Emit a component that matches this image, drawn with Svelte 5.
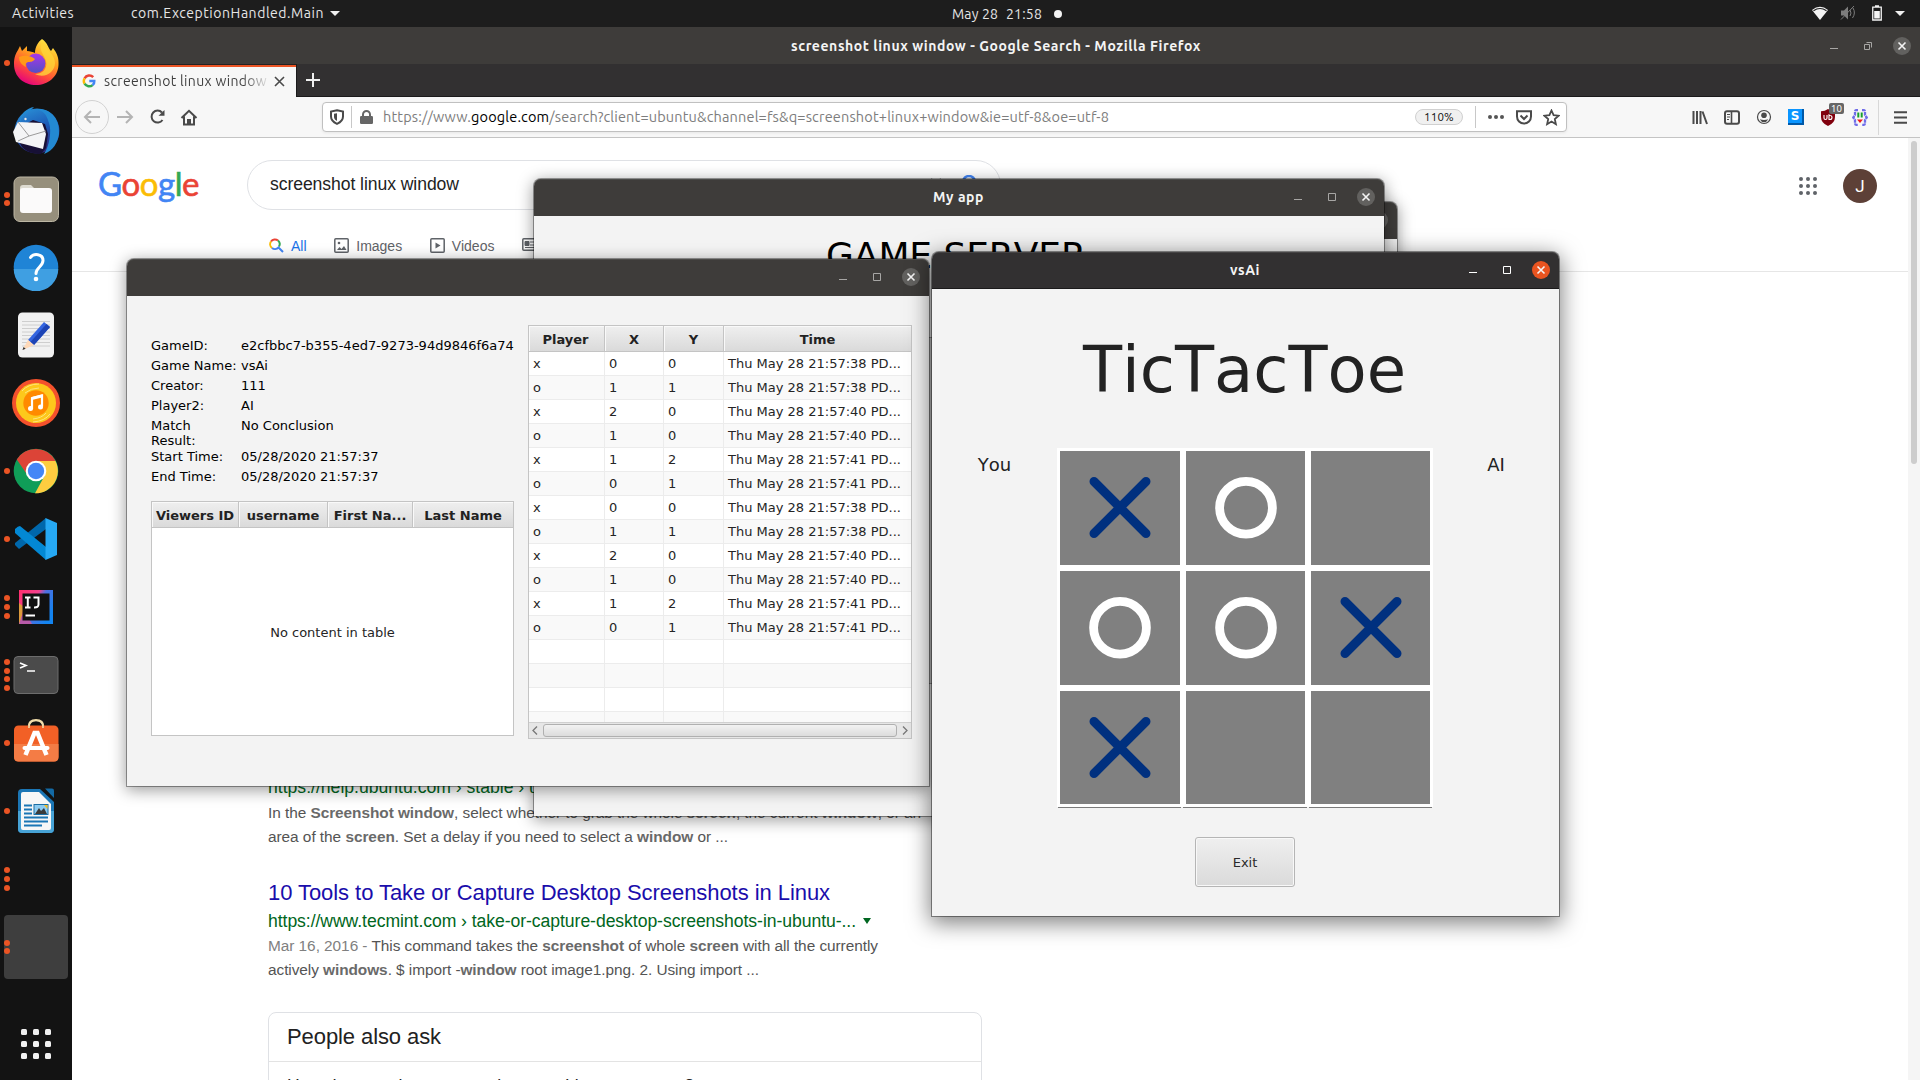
<script>
  // Spreads letters so a run of text occupies a given width
  function fit(node, width) {
    node.style.letterSpacing = '0px';
    const natural = node.getBoundingClientRect().width;
    const count = node.textContent.length;
    node.style.letterSpacing = (width - natural) / count + 'px';
  }

  const dock = [
    { id: 'firefox', dots: 1 },
    { id: 'thunderbird', dots: 0 },
    { id: 'files', dots: 2 },
    { id: 'help', dots: 0 },
    { id: 'editor', dots: 0 },
    { id: 'music', dots: 0 },
    { id: 'chrome', dots: 1 },
    { id: 'vscode', dots: 1 },
    { id: 'idea', dots: 3 },
    { id: 'terminal', dots: 4 },
    { id: 'software', dots: 1 },
    { id: 'writer', dots: 1 },
    { id: 'blank', dots: 3 },
    { id: 'active', dots: 2 }
  ];

  const info = [
    ['GameID:', 'e2cfbbc7-b355-4ed7-9273-94d9846f6a74'],
    ['Game Name:', 'vsAi'],
    ['Creator:', '111'],
    ['Player2:', 'AI'],
    ['Match Result:', 'No Conclusion'],
    ['Start Time:', '05/28/2020 21:57:37'],
    ['End Time:', '05/28/2020 21:57:37']
  ];

  const half = [
    ['x', 0, 0, 38],
    ['o', 1, 1, 38],
    ['x', 2, 0, 40],
    ['o', 1, 0, 40],
    ['x', 1, 2, 41],
    ['o', 0, 1, 41]
  ];
  const moves = [...half, ...half, null, null, null, null];

  const board = ['x', 'o', '', 'o', 'o', 'x', 'x', '', ''];
  const nine = [0, 1, 2, 3, 4, 5, 6, 7, 8];
</script>

{#snippet controls(active)}
  <div class="controls" class:active>
    <svg width="12" height="16" viewBox="0 0 12 16"><path d="M2 10.5h8" /></svg>
    <svg width="12" height="16" viewBox="0 0 12 16"><path d="M2.5 4.5h7v7h-7z" /></svg>
    <svg class="close" width="18" height="18" viewBox="0 0 18 18"><circle cx="9" cy="9" r="9" /><path d="M5.5 5.5l7 7m0-7l-7 7" /></svg>
  </div>
{/snippet}

{#snippet dockIcon(id)}
  <svg class="icon" width="48" height="48" viewBox="0 0 48 48">
    {#if id === 'firefox'}
      <path d="M30 0c6 4 6 9 9 12l2-3c4 5 6 10 5.500 17C46 38 36 46 24 46S2 38 2 25c0-7 2-11 4-14l2-4 2 5 5-5v5c3 0 6 1 8 2 0-6 3-11 7-14z" fill="url(#ffx)" />
      <path d="M31 3c-6 7 1 12 3 19 2 9-5 13-11 13 10 5 20-2 20-11 0-9-9-13-12-21z" fill="#ffd43a" opacity=".8" />
      <circle cx="23.700" cy="24.300" r="9.700" fill="url(#orb)" />
      <path d="M7 18c5-2 11-2 16 2-2 3-5 3-7 3-2 1-3 2-2 5-4-2-7-5-7-10z" fill="#ff9a18" />
    {:else if id === 'thunderbird'}
      <circle cx="25" cy="24" r="22.500" fill="url(#tb)" />
      <path d="M10 40l-9-16 20-11 12 4 3 10-2 14-5 6c-8 0-14-2-19-7z" fill="#171036" />
      <path d="M6 15l24 1 4 11-3 15L4 35 1 25z" fill="#f4f5f6" />
      <path d="M6 15l11 14 17-5M17 29L6 34" fill="none" stroke="#9b9b9b" />
      <path d="M8 16C7 7 15 1 22 0l-3 3c14-2 16 7 18 13 3 8 0 24-5 31 9-3 14-12 15-20C48 12 39 2 27 2c-8 0-18 5-19 14z" fill="#2389d2" />
      <circle cx="13.500" cy="12" r="1.200" fill="#e6e6e6" />
    {:else if id === 'files'}
      <rect x="2" y="2" width="44.500" height="44.500" rx="6" fill="#968f7c" stroke="#bdb7a4" />
      <path d="M8 13q0-3 3-3h8l4 4h15v8H8z" fill="#dedbd1" />
      <rect x="8" y="13" width="32" height="25" rx="3" fill="#fbfafa" />
    {:else if id === 'help'}
      <circle cx="24" cy="24" r="22.300" fill="#1f84d6" />
      <path d="M1.700 26h44.600a22.300 22.300 0 0 1-44.600 0z" fill="#3f9fe2" />
      <path d="M18.500 14.500c3-4.500 12.500-4 12.500 3 0 6-7 7-7 13" fill="none" stroke="#fff" stroke-width="3" stroke-linecap="round" />
      <circle cx="24" cy="36" r="2.300" fill="#fff" />
    {:else if id === 'editor'}
      <rect x="6" y="1.500" width="36" height="45" rx="4.500" fill="#f1f1f1" />
      <path d="M10 10.500h28M10 14h28M10 17.500h28M10 21h28M10 24.500h28M10 28h28M10 31.500h28M10 35h28" stroke="#cecece" />
      <path d="M16 29l16-18 6 5-16 18z" fill="#3465e0" />
      <path d="M18.500 31l16-18 3.500 3-16 18z" fill="#1d44b5" />
      <path d="M16 29l6 5-11.500 5z" fill="#ffd9b8" />
      <path d="M11.500 36l2.200 1.800-3.200 1.200z" fill="#333" />
    {:else if id === 'music'}
      <circle cx="24" cy="24" r="24" fill="#f4512c" />
      <circle cx="24" cy="24" r="20" fill="#fdc81b" />
      <path d="M10 12q6-7 17-7M13 14q6-5 14-5M21 43q12-1 17-8M21 40q9-1 13-6" fill="none" stroke="#ffe37d" />
      <circle cx="24" cy="24" r="12.700" fill="#ff8a00" />
      <path d="M20 30V19l10-2.500v11" fill="none" stroke="#fff" stroke-width="2.200" />
      <path d="M20 18l10-2.500v3L20 21z" fill="#fff" />
      <circle cx="18.500" cy="29.500" r="2.500" fill="#fff" /><circle cx="28.500" cy="28" r="2.500" fill="#fff" />
    {:else if id === 'chrome'}
      <circle cx="24" cy="24" r="22.300" fill="#109d58" />
      <path d="M24 14h19.500A22.300 22.300 0 0 1 23 46.300L33 28z" fill="#fdcd40" />
      <path d="M4.800 12.500A22.300 22.300 0 0 1 43.600 14H24l-9 6-1 6z" fill="#dc4437" />
      <circle cx="24" cy="24" r="10.300" fill="#fff" /><circle cx="24" cy="24" r="8.200" fill="#4486f6" />
    {:else if id === 'vscode'}
      <path d="M3 30l4 4 27-20V3L3 28z" fill="#0067ab" />
      <path d="M3 14q3-3 5-3l26 21v13L3 18z" fill="#0388d4" />
      <path d="M33.500 3L45 8v32l-11.500 5z" fill="#26a9f4" />
    {:else if id === 'idea'}
      <rect x="7" y="7" width="34" height="34" fill="url(#ij)" />
      <path d="M7 20l5 4-4 17H7z" fill="#dd9a3c" />
      <path d="M7 41l5-14 8 14z" fill="#b75aa8" />
      <rect x="10.500" y="10.500" width="27" height="27" fill="#111" />
      <path d="M13 14.500h5.500M15.800 14.500V24M13 24.500h5.500M21.500 14.500h5v7q0 3.200-4.500 3M13.500 32.500h9.500" fill="none" stroke="#fff" stroke-width="2" />
    {:else if id === 'terminal'}
      <rect x="2" y="5.500" width="44" height="37" rx="4" fill="#4b4b4b" stroke="#6d6d6d" />
      <path d="M8 12l6 2.500L8 17M15 20h8" fill="none" stroke="#fff" stroke-width="1.600" />
    {:else if id === 'software'}
      <path d="M16.500 14V8q0-7 7.500-7t7.500 7v6" fill="none" stroke="#f1ddaa" stroke-width="1.800" />
      <rect x="2" y="6.500" width="44.500" height="36" rx="4.500" fill="#f26026" />
      <path d="M2 25h44.500v13q0 4.500-4.500 4.500H6.500Q2 42.500 2 38z" fill="#f47c45" />
      <path d="M17 9V7q1-5.500 7-5.500T31 7v2" fill="none" stroke="#f1ddaa" stroke-width="1.600" />
      <path d="M13.500 36l9-22h3l9 22" fill="none" stroke="#fff" stroke-width="4.500" />
      <path d="M12.500 29h23" stroke="#fff" stroke-width="4" stroke-linecap="round" />
    {:else if id === 'writer'}
      <path d="M10 2h18l14 13v27q0 4-4 4H10q-4 0-4-4V6q0-4 4-4z" fill="#1b76b5" />
      <path d="M6 24h36v18q0 4-4 4H10q-4 0-4-4z" fill="#47a3d6" />
      <path d="M33 1.500h7q2 0 2 2V11z" fill="#136aa5" />
      <path d="M11 5h16l12 12v24q0 2-2 2H11q-2 0-2-2V7q0-2 2-2z" fill="#f7f7f7" />
      <path d="M12 18.500h8M12 22.500h8M12 26.500h8M12 30.500h24M12 34.500h24M12 38.500h18" stroke="#1b76b5" stroke-width="2" />
      <rect x="22" y="17.500" width="14" height="10" fill="#8ccbf1" stroke="#1c6ea4" />
      <path d="M23 27l4-6 2 3 3-3 3 6z" fill="#3b3b3b" /><path d="M32 18h3.500v4z" fill="#f7bd1e" />
    {/if}
  </svg>
{/snippet}

<div class="desktop">
  <svg class="defs" width="0" height="0">
    <defs>
      <linearGradient id="ffx" x1=".8" y1="0" x2=".3" y2="1"><stop offset="0" stop-color="#fff14a" /><stop offset=".4" stop-color="#ff9f1e" /><stop offset=".7" stop-color="#ff4b3a" /><stop offset="1" stop-color="#e4007f" /></linearGradient>
      <linearGradient id="orb" x1="0" y1="0" x2="0" y2="1"><stop offset="0" stop-color="#a936e8" /><stop offset="1" stop-color="#5350c4" /></linearGradient>
      <linearGradient id="tb" x1="0" y1="0" x2=".4" y2="1"><stop offset="0" stop-color="#2b97da" /><stop offset=".6" stop-color="#1c55b4" /><stop offset="1" stop-color="#2c2a7d" /></linearGradient>
      <linearGradient id="ij" x1="0" y1="0" x2="1" y2=".6"><stop offset="0" stop-color="#ff2f6d" /><stop offset=".45" stop-color="#f4418d" /><stop offset=".6" stop-color="#4f6fe0" /><stop offset="1" stop-color="#1384f0" /></linearGradient>
    </defs>
  </svg>

  <header class="topbar">
    <div class="activities"><span class="t" use:fit={62}>Activities</span></div>
    <span class="t" use:fit={193}>com.ExceptionHandled.Main</span>
    <i class="caret"></i>
    <div class="clock"><span class="t" use:fit={46}>May 28</span><span class="t" use:fit={36}>21:58</span><i class="dot"></i></div>
    <div class="tray">
      <svg width="16" height="14" viewBox="0 0 16 14"><path d="M0 4q8-6.500 16 0l-8 10z" fill="#f4f4f4" /><path d="M1.500 4.800q6.500-4.500 13 0" stroke="#1d1d1d" fill="none" stroke-width="1.100" /></svg>
      <svg width="16" height="16" viewBox="0 0 16 16"><path d="M1 5.500h3l4-4v13l-4-4H1z" fill="#7d7d7d" /><path d="M1 14.500L14 1M10 11q2-3 0-6M12.500 13q3.500-5 .5-10" stroke="#7d7d7d" fill="none" /></svg>
      <svg width="10" height="16" viewBox="0 0 10 16"><path d="M.75 2.200h8.500v12.800H.75zM3 1h4" stroke="#f4f4f4" stroke-width="1.300" fill="none" /><path d="M2.200 6h5.600v7.500H2.200z" fill="#f4f4f4" /></svg>
      <i class="caret"></i>
    </div>
  </header>

  <div class="main">
    <nav class="dock">
      {#each dock as item}
        <div class="slot" class:on={item.id === 'active'}>
          <div class="dots">{#each { length: item.dots } as _}<i></i>{/each}</div>
          {@render dockIcon(item.id)}
        </div>
      {/each}
      <div class="launcher">{#each nine as n}<i></i>{/each}</div>
    </nav>

    <section class="firefox">
      <div class="ff-title">
        <span class="t bold" use:fit={410}>screenshot linux window - Google Search - Mozilla Firefox</span>
        <div class="controls">
          <svg width="12" height="16" viewBox="0 0 12 16"><path d="M2 10.500h8" /></svg>
          <svg width="12" height="16" viewBox="0 0 12 16"><path d="M2.500 6.500h5v5h-5zM4.500 4.500h5v5" /></svg>
          <svg class="close" width="18" height="18" viewBox="0 0 18 18"><circle cx="9" cy="9" r="9" /><path d="M5.500 5.500l7 7m0-7l-7 7" /></svg>
        </div>
      </div>
      <div class="tabs">
        <div class="tab">
          <svg width="14" height="14" viewBox="0 0 14 14" fill="none" stroke-width="2.500"><path d="M11.200 3.200A5.300 5.300 0 0 0 2.600 4.300" stroke="#ea4335" /><path d="M2.600 4.300a5.300 5.300 0 0 0 0 5.400" stroke="#fbbc05" /><path d="M2.600 9.700a5.300 5.300 0 0 0 8 1.400" stroke="#34a853" /><path d="M10.600 11.100Q12.500 9.500 12.300 7H7.300" stroke="#4285f4" /></svg>
          <span class="t tabtext" use:fit={163}>screenshot linux window</span>
          <svg width="11" height="11" viewBox="0 0 11 11"><path d="M1 1l9 9m0-9l-9 9" stroke="#4a4a4a" stroke-width="1.600" /></svg>
        </div>
        <svg class="plus" width="14" height="14" viewBox="0 0 14 14"><path d="M7 0v14M0 7h14" stroke="#f0f0f0" stroke-width="2" /></svg>
      </div>

      <div class="toolbar">
        <div class="navbtns">
          <div class="back"><svg width="18" height="16" viewBox="0 0 18 16"><path d="M17 8H2M8 2L2 8l6 6" /></svg></div>
          <svg class="light" width="18" height="16" viewBox="0 0 18 16"><path d="M1 8h15M10 2l6 6-6 6" /></svg>
          <svg class="dark" width="17" height="16" viewBox="0 0 17 16"><path d="M13 3.500A6 6 0 1 0 13.500 11" /><path d="M15.500 1v5.800h-6z" fill="#4a4a4a" stroke="none" /></svg>
          <svg class="dark" width="18" height="17" viewBox="0 0 18 17"><path d="M1.500 9L9 1.800 16.500 9M4 7.500v8h10v-8" /><path d="M7 15v-5h4v5z" fill="#4a4a4a" stroke="none" /></svg>
        </div>
        <div class="url">
          <svg class="dark" width="14" height="16" viewBox="0 0 14 16"><path d="M7 1.300L13 2.500v5c0 4-3 6-6 7.300C4 13.500 1 11.500 1 7.500v-5z" /><path d="M7 4.200L4 4.800V8c0 2 1.500 3.300 3 4z" fill="#4a4a4a" stroke="none" /></svg>
          <i class="vsep"></i>
          <svg width="13" height="14" viewBox="0 0 13 14"><path d="M3 7V4.500a3.500 3.500 0 0 1 7 0V7" fill="none" stroke="#666" stroke-width="2" /><rect y="6" width="13" height="8" rx="1.200" fill="#666" /></svg>
          <span class="t addr" use:fit={726}>https://www.<b>google.com</b>/search?client=ubuntu&amp;channel=fs&amp;q=screenshot+linux+window&amp;ie=utf-8&amp;oe=utf-8</span>
          <span class="zoom"><span class="t" use:fit={30}>110%</span></span>
          <i class="vsep"></i>
          <svg width="16" height="4" viewBox="0 0 16 4" fill="#555"><circle cx="2" cy="2" r="2" /><circle cx="8" cy="2" r="2" /><circle cx="14" cy="2" r="2" /></svg>
          <svg class="dark" width="16" height="15" viewBox="0 0 16 15"><path d="M1 1.200h14v5.300a7 7 0 0 1-14 0z" /><path d="M4.500 5.500L8 9l3.500-3.500" /></svg>
          <svg class="dark thin" width="17" height="17" viewBox="0 0 17 17"><path d="M8.500 1.500l2.100 4.700 5 .5-3.800 3.400 1.100 5.100-4.400-2.600-4.400 2.600 1.100-5.100L1.400 6.700l5-.5z" /></svg>
        </div>
        <div class="ext">
          <svg class="dark" width="16" height="15" viewBox="0 0 16 15"><path d="M1.500 1v13M5 1v13M8.500 1v13M10.500 1.500L15 14" /></svg>
          <svg class="dark" width="16" height="15" viewBox="0 0 16 15"><rect x="1" y="1.200" width="14" height="12.600" rx="2" /><path d="M7.500 1v13" stroke-width="1.600" /><path d="M3 4.500h3M3 7h3M3 9.500h2" stroke-width="1" /></svg>
          <svg width="16" height="16" viewBox="0 0 16 16"><circle cx="8" cy="8" r="6.500" fill="none" stroke="#4a4a4a" stroke-width="1.200" /><circle cx="8" cy="6.200" r="2.800" fill="#4a4a4a" /><path d="M3.800 10.300q4.200 1.400 8.400 0-1.500 3-4.200 3t-4.200-3z" fill="#4a4a4a" /></svg>
          <div class="sbox">S</div>
          <div class="ublock">
            <svg width="16" height="17" viewBox="0 0 16 17"><path d="M8 0q3 2.300 7 2.300V8q0 6-7 9-7-3-7-9V2.300Q5 2.300 8 0z" fill="#80000d" /><path d="M4 6v3q0 1.500 1.500 1.500T7 9V6m2 0v4.500h1q2 0 2-2t-2-2z" fill="none" stroke="#fff" stroke-width="1.100" /></svg>
            <span class="badge">10</span>
          </div>
          <svg width="16" height="17" viewBox="0 0 16 17"><path d="M6 1.200H4Q3 1.200 3 3v3L1.300 8.500 3 11v3q0 1.800 1 1.800h2M10 1.200h2q1 0 1 1.800v3l1.700 2.500L13 11v3q0 1.800-1 1.800h-2" fill="none" stroke="#6f6ce8" stroke-width="2.300" stroke-dasharray="3.500 .6" /><path d="M6.300 3.500v5M9.700 3.500v5" stroke="#19a02b" stroke-width="2" /><path d="M5 10.500h6L8 14z" fill="#f01818" /></svg>
          <i class="vsep long"></i>
          <svg class="dark" width="13" height="13" viewBox="0 0 13 13"><path d="M0 1.200h13M0 6.500h13M0 11.800h13" /></svg>
        </div>
      </div>

      <div class="page">
        <div class="viewport">
          <div class="ghead">
            <div class="grow">
              <div class="logo" use:fit={101}><span class="b">G</span><span class="r">o</span><span class="y">o</span><span class="b">g</span><span class="g">l</span><span class="r">e</span></div>
              <div class="search">
                <span use:fit={189}>screenshot linux window</span>
                <svg width="60" height="20" viewBox="0 0 60 20" fill="none"><path d="M4 4l10 10M14 4L4 14" stroke="#70757a" stroke-width="2" /><circle cx="42" cy="7" r="6" stroke="#4285f4" stroke-width="2.500" /></svg>
              </div>
              <div class="apps">{#each nine as n}<i></i>{/each}</div>
              <div class="avatar">J</div>
            </div>
            <div class="gtabs">
              <span class="sel"><svg width="15" height="15" viewBox="0 0 15 15" fill="none" stroke-width="2"><path d="M2 3.500A4.800 4.800 0 0 1 9 2.500" stroke="#ea4335" /><path d="M9 2.500a4.800 4.800 0 0 1 1 6" stroke="#34a853" /><path d="M2 3.500a4.800 4.800 0 0 0 1 6.500" stroke="#fbbc04" /><path d="M3 10a4.800 4.800 0 0 0 6.500-.5l4.500 4.500" stroke="#4285f4" /></svg>All</span>
              <span><svg width="15" height="15" viewBox="0 0 15 15"><rect x=".8" y=".8" width="13.400" height="13.400" rx="1" fill="none" stroke="#5f6368" stroke-width="1.500" /><path d="M3 12l2.500-3L7.500 11 10 8l2.500 4z" fill="#5f6368" /><circle cx="5" cy="5" r="1.300" fill="#5f6368" /></svg>Images</span>
              <span><svg width="15" height="15" viewBox="0 0 15 15"><rect x=".8" y=".8" width="13.400" height="13.400" rx="1" fill="none" stroke="#5f6368" stroke-width="1.500" /><path d="M5.500 4.500v6l5-3z" fill="#5f6368" /></svg>Videos</span>
              <span><svg width="15" height="13" viewBox="0 0 15 13"><rect x=".8" y=".8" width="13.400" height="11.400" rx="1" fill="none" stroke="#5f6368" stroke-width="1.500" /><path d="M3 3.500h4v4H3zM8 4h5M8 7h5M3 9.500h10" fill="#5f6368" stroke="#5f6368" /></svg></span>
            </div>
          </div>
          <div class="results">
            <p class="link">https://help.ubuntu.com › stable › ubuntu-help</p>
            <div class="snip first">
              <p><span use:fit={653}>In the <b>Screenshot window</b>, select whether to grab the whole <b>screen</b>, the current <b>window</b>, or an</span></p>
              <p><span use:fit={460}>area of the <b>screen</b>. Set a delay if you need to select a <b>window</b> or ...</span></p>
            </div>
            <h3><span use:fit={562}>10 Tools to Take or Capture Desktop Screenshots in Linux</span></h3>
            <p class="link second"><span use:fit={588}>https://www.tecmint.com › take-or-capture-desktop-screenshots-in-ubuntu-...</span><i class="gcaret"></i></p>
            <div class="snip">
              <p><span use:fit={610}><em>Mar 16, 2016 -</em>{' '}This command takes the <b>screenshot</b> of whole <b>screen</b> with all the currently</span></p>
              <p><span use:fit={491}>actively <b>windows</b>. $ import -<b>window</b> root image1.png. 2. Using import ...</span></p>
            </div>
            <div class="ask">
              <h4><span use:fit={154}>People also ask</span></h4>
              <p><span use:fit={407}>How do you take a screenshot on a Linux computer?</span></p>
            </div>
          </div>
        </div>
        <div class="scroll"><i></i></div>
      </div>
    </section>
  </div>

  <div class="win hidden-win"><div class="bar">{@render controls(false)}</div></div>

  <div class="win app">
    <div class="bar"><span class="t bold" use:fit={51}>My app</span>{@render controls(false)}</div>
    <div class="server"><span use:fit={260}>GAME SERVER</span></div>
    <div class="strip"></div>
  </div>

  <div class="win game-info">
    <div class="bar">{@render controls(false)}</div>
    <div class="info-body">
      <div class="left">
        <dl>
          {#each info as [label, value]}
            <dt>{label}</dt>
            <dd>{value}</dd>
          {/each}
        </dl>
        <div class="table viewers">
          <div class="th"><span>Viewers ID</span><span>username</span><span>First Na...</span><span>Last Name</span></div>
          <div class="none">No content in table</div>
        </div>
      </div>
      <div class="table moves">
        <div class="th"><span>Player</span><span>X</span><span>Y</span><span>Time</span></div>
        <div class="rows">
          {#each moves as m}
            <div class="tr">
              {#if m}
                <span>{m[0]}</span><span>{m[1]}</span><span>{m[2]}</span><span>Thu May 28 21:57:{m[3]} PD...</span>
              {:else}
                <span></span><span></span><span></span><span></span>
              {/if}
            </div>
          {/each}
        </div>
        <div class="hscroll">
          <svg width="6" height="9" viewBox="0 0 6 9"><path d="M5 .5l-4 4 4 4" /></svg>
          <i></i>
          <svg width="6" height="9" viewBox="0 0 6 9"><path d="M1 .5l4 4-4 4" /></svg>
        </div>
      </div>
    </div>
  </div>

  <div class="win tictactoe">
    <div class="bar"><span class="t bold" use:fit={30}>vsAi</span>{@render controls(true)}</div>
    <h1>TicTacToe</h1>
    <div class="play">
      <span>You</span>
      <div>
        <div class="board">
          {#each board as mark}
            <div class="cell">
              {#if mark === 'x'}
                <svg width="64" height="64" viewBox="0 0 64 64"><path d="M6 5.500l52 52M58 5.500l-52 52" stroke="#00307f" stroke-width="9" stroke-linecap="round" /></svg>
              {:else if mark === 'o'}
                <svg width="64" height="64" viewBox="0 0 64 64"><circle cx="32" cy="31.700" r="26.400" fill="none" stroke="#fff" stroke-width="8.800" /></svg>
              {/if}
            </div>
          {/each}
        </div>
        <div class="edge"><i></i><i></i><i></i></div>
      </div>
      <span>AI</span>
    </div>
    <button>Exit</button>
  </div>
</div>

<style>
  :global(body) { margin: 0; overflow: hidden; }
  * { box-sizing: border-box; }
  p, h1, h3, h4, dl, dd { margin: 0; font-weight: 400; }
  svg { display: block; flex: none; }
  i { display: block; flex: none; }
  .defs { position: absolute; }
  .desktop { position: relative; width: 1920px; height: 1080px; overflow: hidden; display: flex; flex-direction: column; background: #fff; font-family: "Liberation Sans", Arial, sans-serif; }
  .t { display: inline-block; white-space: pre; font-family: Ubuntu, "Noto Sans", sans-serif; font-size: 14px; line-height: 20px; }
  .bold { font-weight: 700; color: #f4f4f4; }

  .topbar { height: 27px; flex: none; background: #1d1d1d; color: #e6e6e6; display: grid; grid-template-columns: 119px auto auto 1fr auto; align-items: center; padding: 0 15px 1px 12px; position: relative; }
  .caret { width: 0; height: 0; border: 5px solid transparent; border-top-color: #f0f0f0; border-bottom: 0; margin-left: 6px; }
  .clock { display: flex; align-items: center; position: absolute; left: 952px; gap: 8px; }
  .dot { width: 8px; height: 8px; border-radius: 50%; background: #f4f4f4; margin-left: 4px; }
  .tray { grid-column: 5; display: flex; align-items: center; gap: 14px; }
  .tray svg:nth-child(2) { margin-left: -2px; }
  .tray svg:nth-child(3) { margin-left: 2px; }
  .tray .caret { margin-left: -1px; }

  .main { flex: 1; display: flex; min-height: 0; }
  .dock { width: 72px; flex: none; background: #131313; padding-top: 2px; display: flex; flex-direction: column; }
  .slot { height: 64px; margin: 2px 4px; border-radius: 4px; display: flex; align-items: center; }
  .slot.on { background: #3e3e3e; }
  .dots { width: 6px; margin-right: 2px; display: flex; flex-direction: column; gap: 2.700px; }
  .dots i { width: 6px; height: 6px; border-radius: 50%; background: #eb5424; }
  .launcher { margin: 48px 0 0 21px; display: grid; grid-template-columns: repeat(3, 6px); gap: 6px; }
  .launcher i { height: 6px; border-radius: 1.500px; background: #f0f0f0; }

  .firefox { flex: 1; min-width: 0; display: flex; flex-direction: column; }
  .ff-title { height: 37px; flex: none; background: #3e3c3a; display: flex; align-items: center; padding-left: 719px; padding-right: 9px; }
  .controls { margin-left: auto; display: flex; align-items: center; gap: 22px; fill: none; stroke: #a7a6a4; }
  .controls .close { margin-left: -3px; stroke: #f4f4f4; stroke-width: 1.600; }
  .close circle { fill: #62615f; stroke: none; }
  .controls.active { stroke: #fff; }
  .controls.active circle { fill: #e95420; }

  .tabs { height: 33px; flex: none; background: #323031; border-bottom: 1px solid #1b1a1b; display: flex; }
  .tab { width: 225px; height: 33px; margin-bottom: -1px; background: #f7f7f7; border-top: 1px solid #222; border-right: 1px solid #1b1a1b; box-shadow: inset 0 2px #eb5424; display: flex; align-items: center; padding: 0 0 0 10px; flex: none; }
  .tabtext { margin: 0 7px 0 8px; flex: none; background: linear-gradient(90deg, #3c3c3c 85%, #dcdcdc); background-clip: text; color: transparent; }
  .plus { margin: 9px 0 0 9px; }
  .toolbar { height: 41px; flex: none; background: #f7f7f7; border-bottom: 1px solid #c4c4c4; display: flex; align-items: center; padding: 0 13px 0 3px; }
  .navbtns { display: flex; align-items: center; width: 247px; gap: 14.300px; }
  .back { width: 34px; height: 34px; border: 1px solid #d2d2d2; border-radius: 50%; display: grid; place-items: center; margin-right: -7px; }
  .back svg, .light { fill: none; stroke: #b4b4b4; stroke-width: 2; }
  .dark { fill: none; stroke: #4a4a4a; stroke-width: 2; }
  .thin { stroke-width: 1.800; }
  .url { width: 1245px; height: 30px; border: 1px solid #c0c0c0; border-radius: 4px; background: #fff; box-shadow: 0 1px 3px #0001; display: flex; align-items: center; padding: 0 6px 0 7px; }
  .vsep { width: 1px; height: 22px; background: #c8c8c8; margin: 0 8px 0 7px; }
  .addr { margin-left: 10px; color: #7d7d7d; font-size: 14.500px; }
  .addr b { font-weight: 400; color: #000; }
  .zoom { margin-left: auto; height: 16px; width: 48px; border: 1px solid #d0d0d0; border-radius: 8px; background: #f0f0f0; display: flex; align-items: center; justify-content: center; margin-right: 5px; color: #111; }
  .zoom .t { font-size: 11.500px; line-height: 14px; }
  .url .zoom ~ svg { margin-left: 11px; }
  .url .zoom ~ svg:nth-last-child(3) { margin-left: 4px; }
  .url .zoom ~ svg:nth-last-child(2) { margin-left: 12px; }
  .ext { margin-left: auto; display: flex; align-items: center; gap: 16px; }
  .sbox { width: 16px; height: 16px; background: #0a95ff; box-shadow: inset -2px -2px #0059a8; color: #fff; font: 700 12px/14px "DejaVu Sans", sans-serif; text-align: center; padding-right: 2px; }
  .ublock { position: relative; }
  .badge { position: absolute; left: 9px; top: -6px; width: 15px; height: 11px; border-radius: 2px; background: #666; color: #fff; font: 9.500px/11px "Noto Sans", sans-serif; text-align: center; }
  .long { height: 35px; margin: 0 -1px 0 -6px; background: #d8d8d8; }

  .page { flex: 1; display: flex; min-height: 0; overflow: hidden; background: #fff; }
  .viewport { flex: 1; min-width: 0; }
  .scroll { width: 12px; background: #f5f5f5; padding: 3px; }
  .scroll i { width: 6px; height: 323px; border-radius: 3px; background: #cdcdcd; }
  .ghead { height: 134px; border-bottom: 1px solid #e6e6e6; padding-top: 22px; }
  .grow { display: flex; align-items: center; height: 50px; padding: 0 31px 0 26px; }
  .logo { font-family: Lato, sans-serif; font-size: 33px; line-height: 40px; margin-bottom: 5px; white-space: nowrap; -webkit-text-stroke: .6px; }
  .b { color: #4285f4; } .r { color: #ea4335; } .y { color: #fbbc05; } .g { color: #34a853; }
  .search { margin-left: 48px; width: 754px; height: 50px; border: 1px solid #dfe1e5; border-radius: 25px; padding: 0 13px 0 22px; display: flex; align-items: center; justify-content: space-between; font-size: 17.600px; color: #222; }
  .search span { margin-bottom: 1px; white-space: nowrap; }
  .apps { margin: 2px 26px 0 auto; display: grid; grid-template-columns: repeat(3, 4px); gap: 3px; }
  .apps i { height: 4px; border-radius: 50%; background: #5f6368; }
  .avatar { width: 34px; height: 34px; margin-top: 2px; border-radius: 50%; background: #5d4037; color: #fff; font: 17px/35px Roboto, sans-serif; text-align: center; }
  .gtabs { display: flex; padding: 28px 0 0 197px; font-size: 14px; line-height: 17px; color: #5f6368; }
  .gtabs span { display: flex; gap: 7px; margin-right: 27.700px; }
  .gtabs .sel { color: #1a73e8; }

  .results { margin-left: 196px; padding-top: 503px; width: 720px; white-space: nowrap; }
  .results span { display: inline-block; white-space: pre; }
  .link { font-size: 17.600px; line-height: 24px; height: 24px; color: #006621; }
  .second { margin-top: 2px; display: flex; align-items: center; }
  .gcaret { border: 4px solid transparent; border-top: 6px solid #006621; border-bottom: 0; margin-left: 7px; }
  .snip { font-size: 15.400px; line-height: 24px; color: #545454; margin-top: 1px; }
  .snip p { height: 24px; }
  .snip.first { margin-top: 2px; }
  .snip b { color: #6a6a6a; }
  .snip em { font-style: normal; color: #808080; }
  h3 { margin-top: 30px; height: 28px; font-size: 22px; line-height: 28px; color: #1a0dab; }
  .ask { margin-top: 30px; width: 714px; height: 120px; border: 1px solid #dfe1e5; border-radius: 8px; color: #222; }
  .ask h4 { height: 49px; border-bottom: 1px solid #e3e3e3; padding-left: 18px; font-size: 22px; line-height: 47px; }
  .ask p { padding: 14px 0 0 18px; font-size: 17.600px; line-height: 20px; }

  .win { position: absolute; background: #f3f3f3; border-radius: 7px 7px 0 0; box-shadow: 0 0 0 1px #0000005c, 0 3px 16px 1px #00000066; }
  .bar { height: 37px; border-radius: 7px 7px 0 0; background: #3e3c3a; display: flex; align-items: center; justify-content: flex-end; padding: 0 9px 1px 0; box-shadow: inset 0 1px #4c4b49; }
  .bar .t { margin-left: auto; }
  .hidden-win { left: 980px; top: 202px; width: 417px; height: 400px; }
  .app { left: 534px; top: 179px; width: 850px; height: 637px; }
  .app .bar .t { margin-right: 308px; }
  .app .controls, .tictactoe .controls { margin-left: 0; }
  .server { padding: 18px 0 0 292px; height: 61px; font: 36px/43px "DejaVu Sans", sans-serif; color: #000; font-kerning: none; white-space: nowrap; }
  .server span { display: inline-block; }
  .strip { width: 60px; height: 347px; margin: 60px 0 0 350px; background: #d8d8d8; border: 1px solid #999; }
  .game-info { left: 127px; top: 259px; width: 802px; height: 527px; font: 13px/15px "DejaVu Sans", sans-serif; color: #000; }
  .info-body { display: flex; padding-left: 24px; gap: 14px; }
  .left { width: 363px; padding-top: 42px; }
  dl { display: grid; grid-template-columns: 72px 1fr; column-gap: 18px; grid-template-rows: repeat(4, 20px) 31px 20px 20px; }
  dt, dd { white-space: nowrap; }
  dt:nth-of-type(5) { white-space: normal; }
  .table { border: 1px solid #c4c4c4; background: #fff; color: #252525; display: flex; flex-direction: column; overflow: hidden; }
  .viewers { height: 235px; margin-top: 12px; }
  .moves { width: 384px; height: 414px; margin-top: 29px; }
  .th { display: grid; flex: none; height: 26px; font-weight: 700; color: #222; }
  .th span { background: linear-gradient(#efefef, #dadada); border-right: 1px solid #c4c4c4; border-bottom: 1px solid #c4c4c4; box-shadow: inset 1px 1px #f9f9f9; text-align: center; line-height: 28px; height: 26px; white-space: nowrap; }
  .th span:last-child { border-right: 0; }
  .moves .th span:first-child { padding-right: 2px; }
  .viewers .th { grid-template-columns: 87px 89px 85px 1fr; }
  .none { flex: 1; display: grid; place-items: center; padding-top: 2px; }
  .moves .th, .tr { grid-template-columns: 76px 59px 60px 1fr; }
  .rows { flex: 1; overflow: hidden; }
  .tr { display: grid; height: 24px; background: #fff; }
  .tr:nth-child(even) { background: #f9f9f9; }
  .tr span { border-right: 1px solid #ececec; border-bottom: 1px solid #ececec; padding-left: 4px; line-height: 23px; white-space: nowrap; }
  .tr span:last-child { border-right: 0; }
  .hscroll { height: 16px; flex: none; border-top: 1px solid #d0d0d0; background: #e6e6e6; display: flex; align-items: center; justify-content: space-between; padding: 0 3px; fill: none; stroke: #777; stroke-width: 1.300; }
  .hscroll i { width: 354px; height: 13px; border: 1px solid #b0b0b0; border-radius: 3px; background: linear-gradient(#f2f2f2, #dcdcdc); }

  .tictactoe { left: 932px; top: 252px; width: 627px; height: 664px; box-shadow: 0 0 0 1px #00000066, 0 5px 22px 2px #00000080; color: #222; font-family: "DejaVu Sans", sans-serif; }
  .tictactoe .bar { height: 37px; background: #323031; border-bottom: 1px solid #1b1a1b; box-shadow: inset 0 1px #454344; padding-bottom: 0; }
  .tictactoe .bar .t { margin-right: 207px; }
  h1 { margin-top: 44px; height: 74px; font-size: 64px; line-height: 74px; text-align: center; font-kerning: none; }
  h1 { padding-right: 2px; }
  .play { margin-top: 41px; display: grid; grid-template-columns: 125px 376px 126px; text-align: center; font-size: 18px; line-height: 21px; }
  .play > span { padding-top: 6px; font-kerning: none; }
  .board { background: #fff; padding: 3px; display: grid; grid-template-columns: 120px 119px 119px; grid-template-rows: 114px 114px 113px; gap: 6px; }
  .cell { background: #808080; display: grid; place-items: center; }
  .edge { display: flex; gap: 2px; padding: 0 1px; }
  .edge i { flex: 1; height: 1px; background: #7a7a7a; }
  button { display: block; margin: 29px 0 0 263px; width: 100px; height: 50px; border: 1px solid #b5b5b5; border-radius: 3px; background: linear-gradient(#efefef, #dadada); box-shadow: inset 0 0 0 1px #f8f8f8; font: 13px "DejaVu Sans", sans-serif; color: #2a2a2a; padding: 0; }
</style>
